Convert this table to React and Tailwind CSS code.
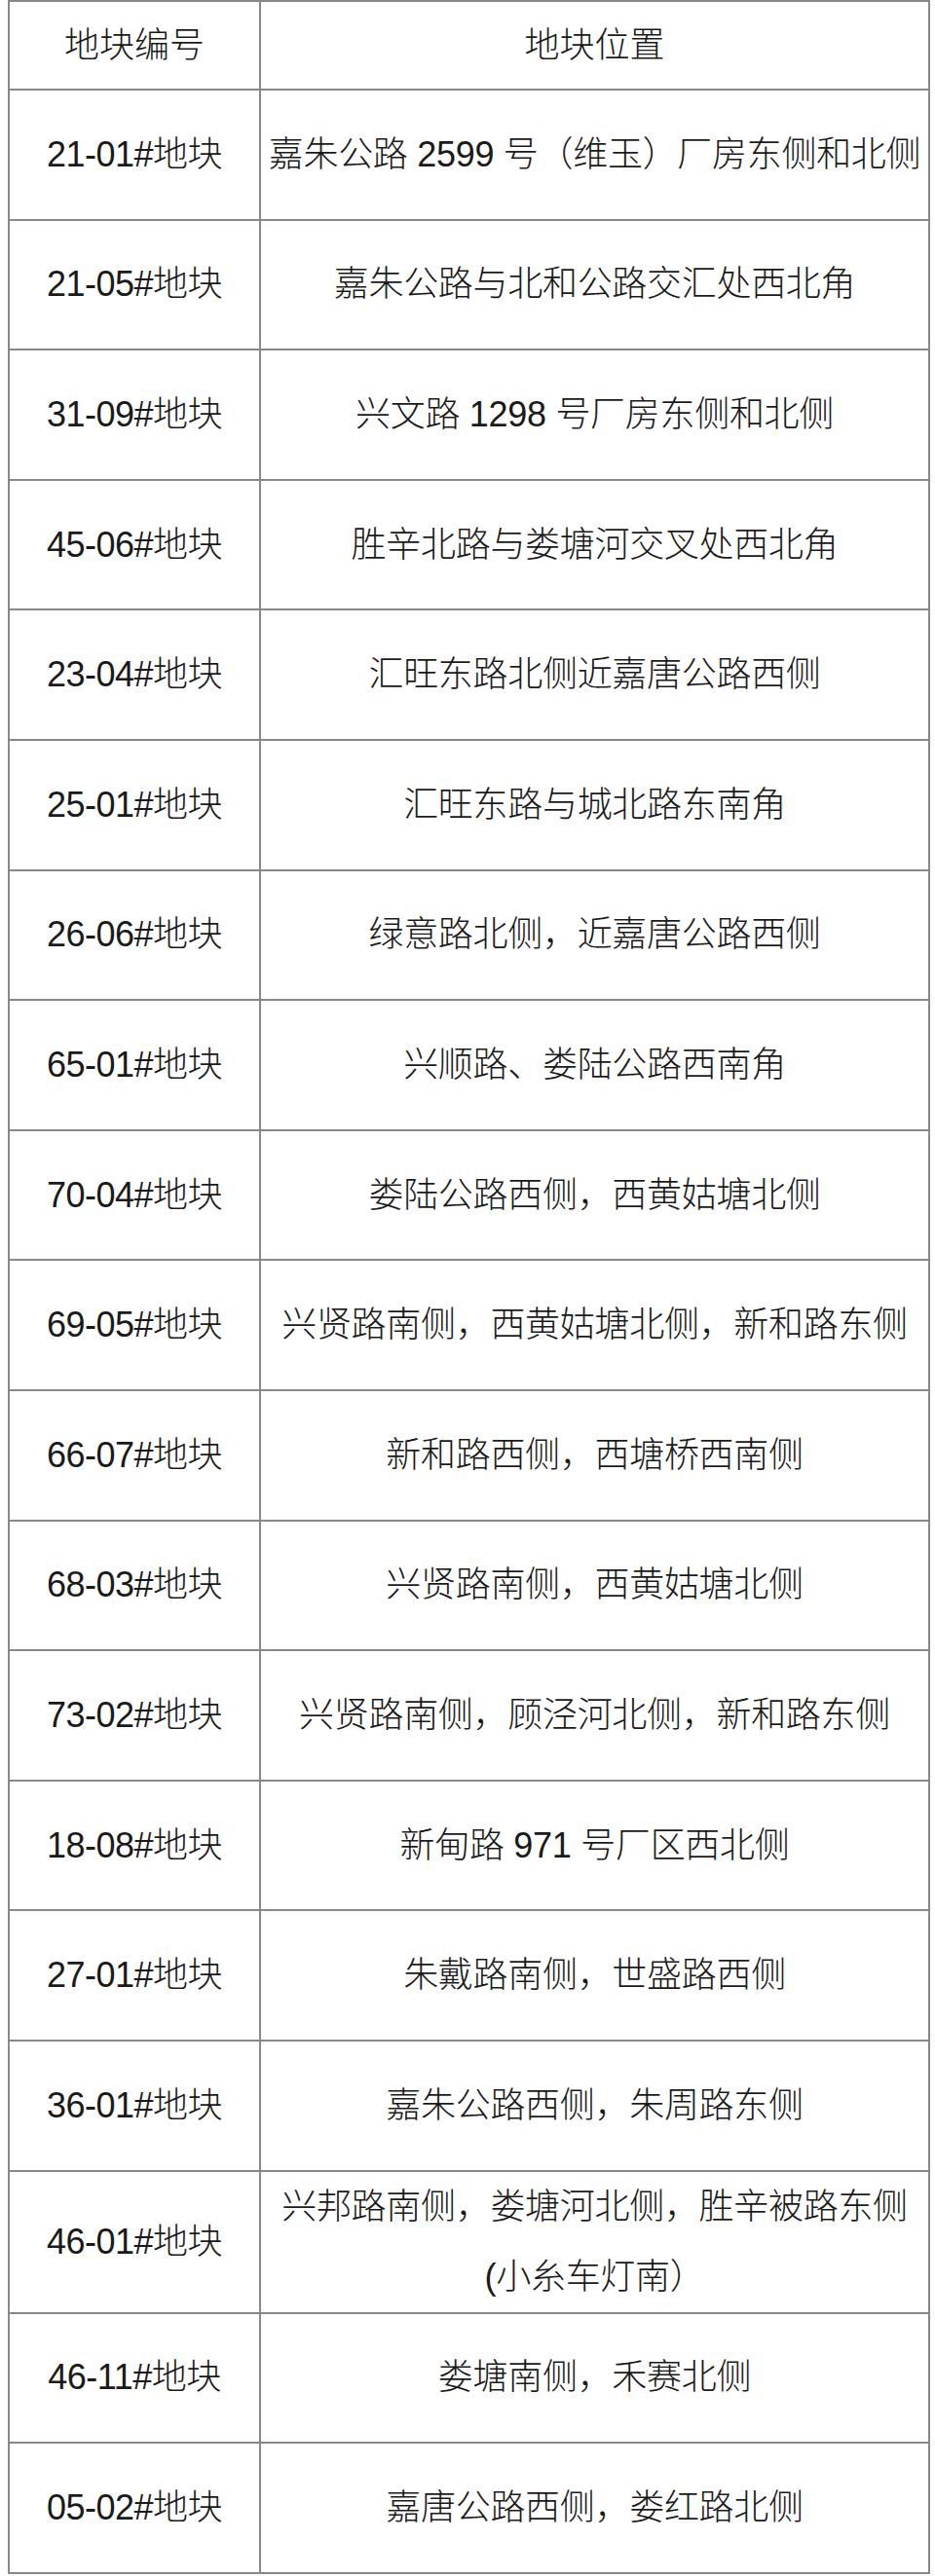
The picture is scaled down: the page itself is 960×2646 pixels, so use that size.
import React from 'react'

const rows = [
  ['21-01#地块', ['嘉朱公路 2599 号（维玉）厂房东侧和北侧']],
  ['21-05#地块', ['嘉朱公路与北和公路交汇处西北角']],
  ['31-09#地块', ['兴文路 1298 号厂房东侧和北侧']],
  ['45-06#地块', ['胜辛北路与娄塘河交叉处西北角']],
  ['23-04#地块', ['汇旺东路北侧近嘉唐公路西侧']],
  ['25-01#地块', ['汇旺东路与城北路东南角']],
  ['26-06#地块', ['绿意路北侧，近嘉唐公路西侧']],
  ['65-01#地块', ['兴顺路、娄陆公路西南角']],
  ['70-04#地块', ['娄陆公路西侧，西黄姑塘北侧']],
  ['69-05#地块', ['兴贤路南侧，西黄姑塘北侧，新和路东侧']],
  ['66-07#地块', ['新和路西侧，西塘桥西南侧']],
  ['68-03#地块', ['兴贤路南侧，西黄姑塘北侧']],
  ['73-02#地块', ['兴贤路南侧，顾泾河北侧，新和路东侧']],
  ['18-08#地块', ['新甸路 971 号厂区西北侧']],
  ['27-01#地块', ['朱戴路南侧，世盛路西侧']],
  ['36-01#地块', ['嘉朱公路西侧，朱周路东侧']],
  ['46-01#地块', ['兴邦路南侧，娄塘河北侧，胜辛被路东侧', '(小糸车灯南）']],
  ['46-11#地块', ['娄塘南侧，禾赛北侧']],
  ['05-02#地块', ['嘉唐公路西侧，娄红路北侧']]
]

export default function App() {
  return (
    <div
      className="min-h-[2646px] bg-white px-[8px] text-[36px] font-light text-[#1a1a1a]"
      style={{ fontFamily: '"Liberation Sans", "Noto Sans CJK SC", sans-serif' }}
    >
      <div className="w-[947px] border-l-2 border-t-2 border-[#888]">
        {/* 表頭 */}
        <div className="flex h-[91px] border-b-2 border-[#888]">
          <div className="flex w-[258px] shrink-0 items-center justify-center border-r-2 border-[#888]">
            地块编号
          </div>
          <div className="flex flex-1 items-center justify-center border-r-2 border-[#888]">
            地块位置
          </div>
        </div>

        {rows.map(([code, lines]) => (
          <div
            key={code}
            className={
              lines.length > 1
                ? 'flex min-h-[144px] border-b-2 border-[#888]'
                : 'flex h-[133.6px] border-b-2 border-[#888]'
            }
          >
            <div className="flex w-[258px] shrink-0 items-center justify-center border-r-2 border-[#888] tracking-[-0.5px]">
              {code}
            </div>
            <div className="flex flex-1 flex-col items-center justify-center border-r-2 border-[#888] leading-[72px] tracking-[-0.3px]">
              {lines.map((line) => (
                <span key={line} className="whitespace-nowrap">
                  {line}
                </span>
              ))}
            </div>
          </div>
        ))}
      </div>
    </div>
  )
}
